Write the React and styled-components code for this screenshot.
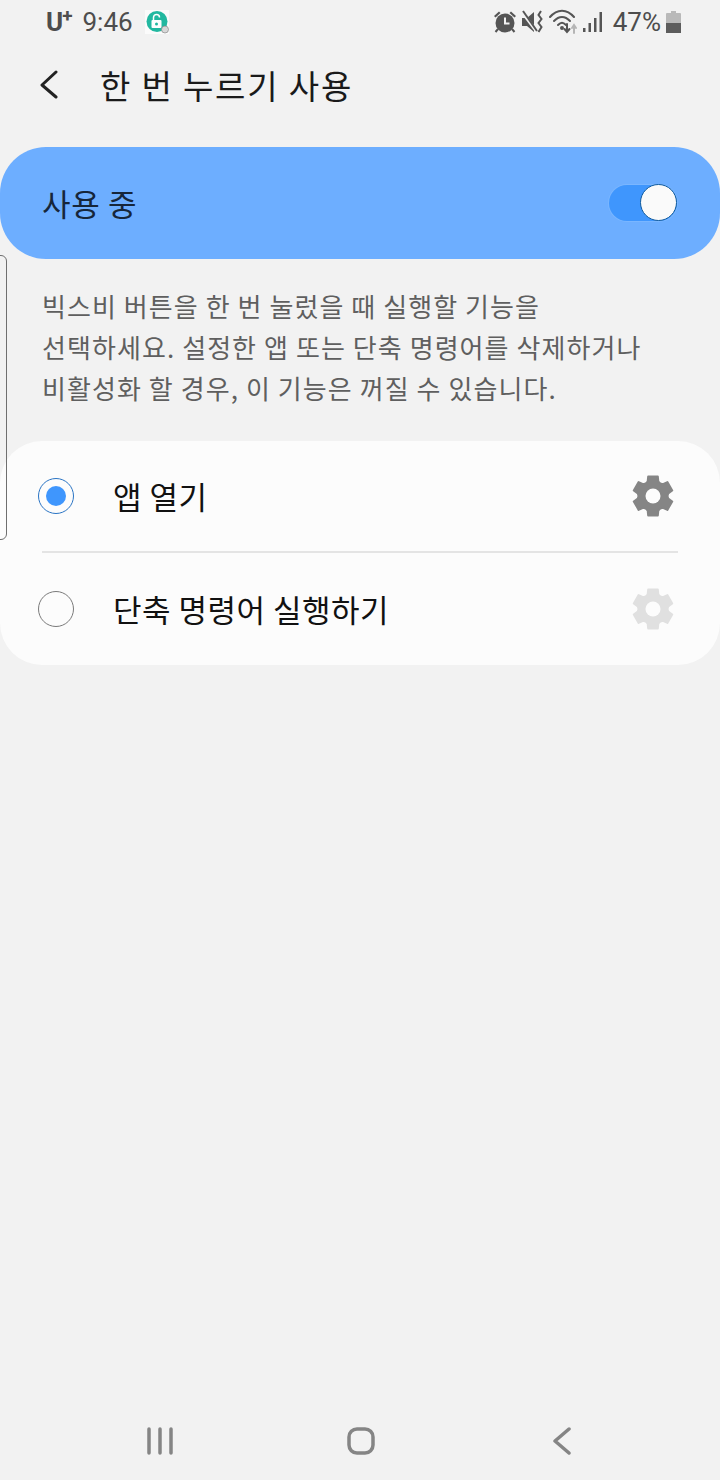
import React from 'react';
import styled, { createGlobalStyle } from 'styled-components';

const GlobalStyle = createGlobalStyle`
  html, body {
    margin: 0;
    padding: 0;
    background: #f2f2f2;
  }
  * {
    box-sizing: border-box;
  }
`;

const Page = styled.div`
  position: relative;
  width: 720px;
  height: 1480px;
  display: flex;
  flex-direction: column;
  overflow: hidden;
  background: #f2f2f2;
  color: #111;
  font-family: "Noto Sans CJK KR", "Noto Sans", sans-serif;
`;

const StatusBar = styled.div`
  height: 44px;
  padding: 0 39px 0 46px;
  display: flex;
  align-items: center;
  justify-content: space-between;
  font-family: Roboto, sans-serif;
  color: #4d4d4d;
`;

const StatusGroup = styled.div`
  display: flex;
  align-items: center;
  gap: ${(p) => p.$gap || 0}px;
`;

const Carrier = styled.span`
  font-size: 26px;
  font-weight: 700;
  line-height: 26px;
  margin-right: 11px;
  letter-spacing: -1px;
  sup {
    font-size: 19px;
    line-height: 0;
    vertical-align: 9px;
  }
`;

const Clock = styled.span`
  font-size: 26px;
  line-height: 26px;
  margin-right: 12px;
`;

const Percent = styled.span`
  font-size: 26px;
  line-height: 26px;
  margin: 0 1px 0 6px;
`;

const Header = styled.header`
  height: 83px;
  padding: 0 0 0 40px;
  display: flex;
  align-items: center;
  gap: 42px;
  margin-top: -1px;
`;

const Title = styled.h1`
  margin: 0;
  font-size: 33px;
  font-weight: 400;
  letter-spacing: 1.85px;
  color: #1a1a1a;
`;

const MasterSwitch = styled.div`
  height: 112px;
  margin-top: 21px;
  padding: 0 43px 0 42px;
  border-radius: 46px;
  background: #6daeff;
  display: flex;
  align-items: center;
  justify-content: space-between;
`;

const SwitchLabel = styled.span`
  margin-bottom: 2px;
  font-size: 31px;
  letter-spacing: 0.7px;
  color: #16263a;
`;

const Track = styled.div`
  position: relative;
  width: 68px;
  height: 36px;
  border-radius: 18px;
  background: #3f96fd;
  box-shadow: 0 0 0 1px #7ab6ff;
`;

const Knob = styled.div`
  position: absolute;
  right: 0;
  top: -1px;
  width: 37px;
  height: 37px;
  border-radius: 50%;
  background: #fafafa;
  border: 1.5px solid #0f5a9e;
`;

const Description = styled.p`
  margin: 26px 0 0;
  padding: 0 42px;
  font-size: 26px;
  line-height: 41px;
  letter-spacing: 1.07px;
  color: #5f5f5f;
  white-space: pre-line;
`;

const Card = styled.div`
  margin-top: 33px;
  border-radius: 42px;
  background: #fcfcfc;
  display: flex;
  flex-direction: column;
`;

const Row = styled.div`
  height: ${(p) => p.$height}px;
  padding: 0 46px 0 38px;
  display: flex;
  align-items: center;
`;

const Radio = styled.div`
  width: 36px;
  height: 36px;
  border-radius: 50%;
  border: 1px solid ${(p) => (p.$on ? '#2a74c4' : '#7a7a7a')};
  display: flex;
  align-items: center;
  justify-content: center;
  &::after {
    content: '';
    display: ${(p) => (p.$on ? 'block' : 'none')};
    width: 20px;
    height: 20px;
    border-radius: 50%;
    background: #3f96fd;
  }
`;

const RowLabel = styled.span`
  flex: 1;
  margin: 0 0 2px 39px;
  font-size: 31px;
  letter-spacing: 0.5px;
  color: #111;
`;

const GearSvg = styled.svg`
  display: block;
  color: ${(p) => (p.$dim ? '#e0e0e0' : '#858585')};
`;

const Divider = styled.div`
  height: 2px;
  margin: 0 42px;
  background: #e4e4e4;
`;

const EdgeHandle = styled.div`
  position: absolute;
  left: -2px;
  top: 255px;
  width: 9px;
  height: 285px;
  border: 1px solid #6f6f6f;
  border-radius: 0 6px 6px 0;
`;

const NavBar = styled.nav`
  margin-top: auto;
  height: 53px;
  padding: 0 0 0 147px;
  display: flex;
  align-items: flex-start;
  gap: 174px;
  color: #858585;
  svg {
    display: block;
  }
`;

// six wide lobes, top and bottom one on the vertical axis
const gearPoints = () => {
  const pts = [];
  for (let k = 0; k < 6; k++) {
    const a = k * 60 - 90;
    [[-30, 14.5], [-20, 15.5], [-14, 20], [14, 20], [20, 15.5]].forEach(([d, r]) => {
      const rad = ((a + d) * Math.PI) / 180;
      pts.push(`${(21 + r * Math.cos(rad)).toFixed(2)},${(21 + r * Math.sin(rad)).toFixed(2)}`);
    });
  }
  return pts.join(' ');
};

const Gear = ({ dim }) => (
  <GearSvg $dim={dim} width="42" height="42" viewBox="0 0 42 42">
    <polygon points={gearPoints()} fill="currentColor" stroke="currentColor" strokeWidth="2" strokeLinejoin="round" />
    <circle cx="21" cy="21" r="7.500" fill="#fcfcfc" />
  </GearSvg>
);

const AlarmIcon = () => (
  <svg width="24" height="24" viewBox="0 0 24 24" fill="#555">
    <circle cx="12" cy="13" r="9.500" />
    <path d="M1 6l5-4.500 1.500 1.500-5 4.500zM23 6l-5-4.500-1.500 1.500 5 4.500z" />
    <path d="M5 19l-2.500 3M19 19l2.500 3" stroke="#555" strokeWidth="2" />
    <path d="M12 7.500v6h4.500" fill="none" stroke="#f2f2f2" strokeWidth="2" />
  </svg>
);

const MuteIcon = () => (
  <svg width="24" height="24" viewBox="0 0 24 24" fill="#555">
    <path d="M1 8h5l7-6v20l-7-6H1z" />
    <path d="M1 2l15 20" stroke="#f2f2f2" strokeWidth="3" />
    <path d="M2 1l14 20" stroke="#555" strokeWidth="2" />
    <path d="M20 1l-2.500 4 3 4-3 4 3 4-3 5" fill="none" stroke="#555" strokeWidth="2" />
  </svg>
);

const WifiIcon = () => (
  <svg width="30" height="26" viewBox="0 0 30 26" fill="none" stroke="#555" strokeWidth="2" strokeLinecap="round">
    <path d="M1 8c7-8.500 17-8.500 24 0" />
    <path d="M5 12c5-5.500 11-5.500 16 0" />
    <path d="M9 16c3-3 5-3 8 0" />
    <circle cx="13" cy="19" r="1" fill="#555" />
    <path d="M18 15v7M15.500 20l2.500 3 2.500-3" />
    <path d="M25 24v-8M23 19l2-3 2 3" stroke="#b5b5b5" />
  </svg>
);

const SignalIcon = () => (
  <svg width="20" height="22" viewBox="0 0 20 22" fill="#555">
    <rect x="0" y="17" width="2.500" height="4" />
    <rect x="5.500" y="12" width="2.500" height="9" />
    <rect x="11" y="7" width="2.500" height="14" />
    <rect x="16.500" y="1" width="2.500" height="20" />
  </svg>
);

const BatteryIcon = () => (
  <svg width="15" height="22" viewBox="0 0 15 22">
    <path d="M5 0h5v2h4a1 1 0 0 1 1 1v19H0V3a1 1 0 0 1 1-1h4z" fill="#b9b9b9" />
    <rect x="0" y="12" width="15" height="10" fill="#5c5c5c" />
  </svg>
);

const AppLockIcon = () => (
  <svg width="24" height="24" viewBox="0 0 24 24">
    <rect width="24" height="24" fill="#fbfbfb" />
    <circle cx="12" cy="11.500" r="10.500" fill="#22b8a0" />
    <rect x="6.500" y="10" width="10" height="8" rx="1" fill="#fff" />
    <path d="M8.500 10V7.500a3 3 0 0 1 6 0" fill="none" stroke="#fff" strokeWidth="1.500" />
    <circle cx="11.500" cy="14" r="1.500" fill="#22b8a0" />
    <circle cx="20" cy="19.500" r="3.500" fill="#d8d8d8" stroke="#888" strokeWidth="0.700" />
  </svg>
);

const BackIcon = () => (
  <svg width="18" height="30" viewBox="0 0 18 30" fill="none" stroke="#222" strokeWidth="3" strokeLinecap="round" strokeLinejoin="round">
    <path d="M16 2L2 15l14 12" />
  </svg>
);

const RecentsIcon = () => (
  <svg width="26" height="28" viewBox="0 0 26 28" fill="none" stroke="currentColor" strokeWidth="3.500" strokeLinecap="round">
    <path d="M2 2v24M13 2v24M24 2v24" />
  </svg>
);

const HomeIcon = () => (
  <svg width="28" height="28" viewBox="0 0 28 28" fill="none" stroke="currentColor" strokeWidth="3.500">
    <rect x="2" y="2" width="24" height="24" rx="8" />
  </svg>
);

const NavBackIcon = () => (
  <svg width="22" height="28" viewBox="-4 0 22 28" fill="none" stroke="currentColor" strokeWidth="3.500" strokeLinecap="round" strokeLinejoin="round">
    <path d="M16 2L2 14l14 12" />
  </svg>
);

const App = () => {
  return (
    <Page>
      <GlobalStyle />
      <StatusBar>
        <StatusGroup>
          <Carrier>U<sup>+</sup></Carrier>
          <Clock>9:46</Clock>
          <AppLockIcon />
        </StatusGroup>
        <StatusGroup $gap={4}>
          <AlarmIcon />
          <MuteIcon />
          <WifiIcon />
          <SignalIcon />
          <Percent>47%</Percent>
          <BatteryIcon />
        </StatusGroup>
      </StatusBar>
      <Header>
        <BackIcon />
        <Title>한 번 누르기 사용</Title>
      </Header>
      <MasterSwitch>
        <SwitchLabel>사용 중</SwitchLabel>
        <Track>
          <Knob />
        </Track>
      </MasterSwitch>
      <Description>
        {'빅스비 버튼을 한 번 눌렀을 때 실행할 기능을\n선택하세요. 설정한 앱 또는 단축 명령어를 삭제하거나\n비활성화 할 경우, 이 기능은 꺼질 수 있습니다.'}
      </Description>
      <Card>
        <Row $height={110}>
          <Radio $on />
          <RowLabel>앱 열기</RowLabel>
          <Gear />
        </Row>
        <Divider />
        <Row $height={112}>
          <Radio />
          <RowLabel>단축 명령어 실행하기</RowLabel>
          <Gear dim />
        </Row>
      </Card>
      <EdgeHandle />
      <NavBar>
        <RecentsIcon />
        <HomeIcon />
        <NavBackIcon />
      </NavBar>
    </Page>
  );
};

export default App;
